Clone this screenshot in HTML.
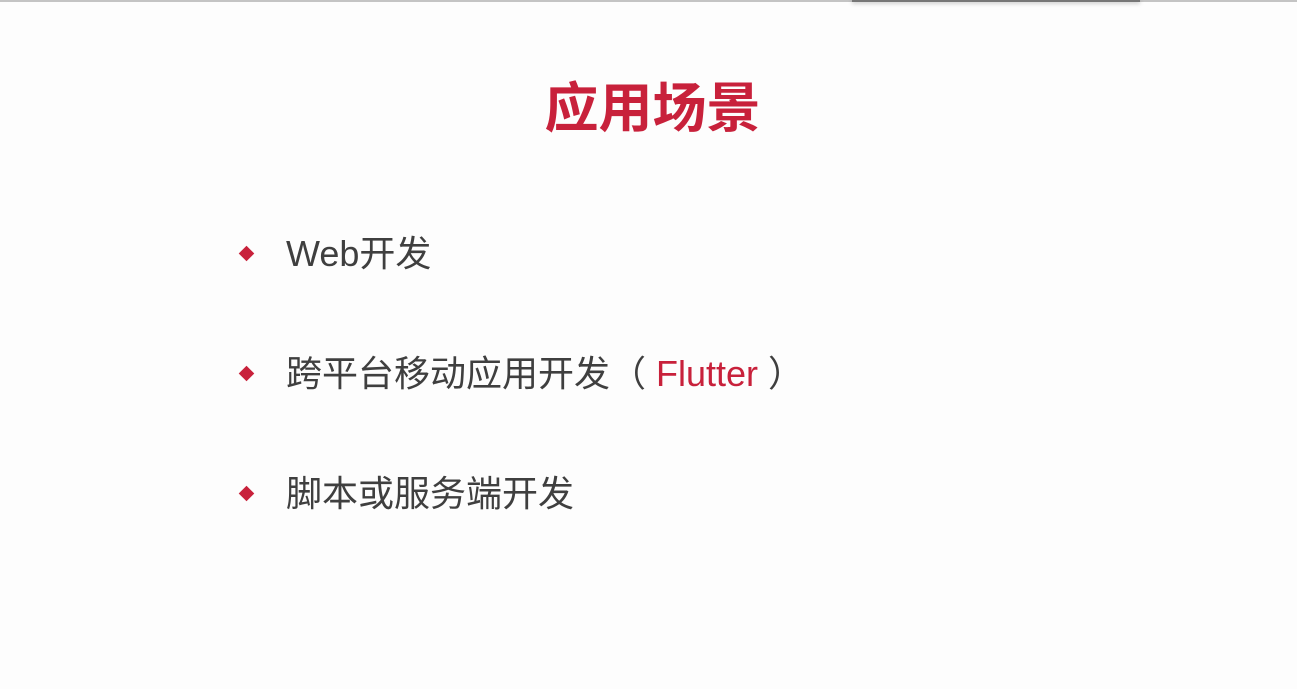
<!DOCTYPE html>
<html><head><meta charset="utf-8"><style>
body{margin:0;width:1297px;height:689px;background:#fdfdfd;position:relative;overflow:hidden;font-family:"Liberation Sans","Noto Sans CJK SC",sans-serif}
.top{position:absolute;left:0;top:0;width:1297px;height:2px;background:#c4c4c4}
.sh{position:absolute;left:852px;top:0;width:288px;height:2px;background:#777;box-shadow:0 1px 4px rgba(0,0,0,.35)}
h1{position:absolute;left:0;width:1297px;top:74px;margin:0;text-align:center;font-size:54px;line-height:70px;color:#c8213b;font-weight:bold;padding-left:4px}
.d{position:absolute;left:241px;width:11px;height:11px;background:#c8213b;transform:rotate(45deg)}
.t{position:absolute;left:286px;font-size:36px;line-height:44px;color:#3f3f3f;white-space:pre}
.r{color:#c8213b}
</style></head><body>
<div class="top"></div><div class="sh"></div>
<h1>应用场景</h1>
<div class="d" style="top:248px"></div><div class="t" style="top:232px">Web开发</div>
<div class="d" style="top:368px"></div><div class="t" style="top:352px">跨平台移动应用开发（ <span class="r">Flutter</span> ）</div>
<div class="d" style="top:488px"></div><div class="t" style="top:472px">脚本或服务端开发</div>
</body></html>
